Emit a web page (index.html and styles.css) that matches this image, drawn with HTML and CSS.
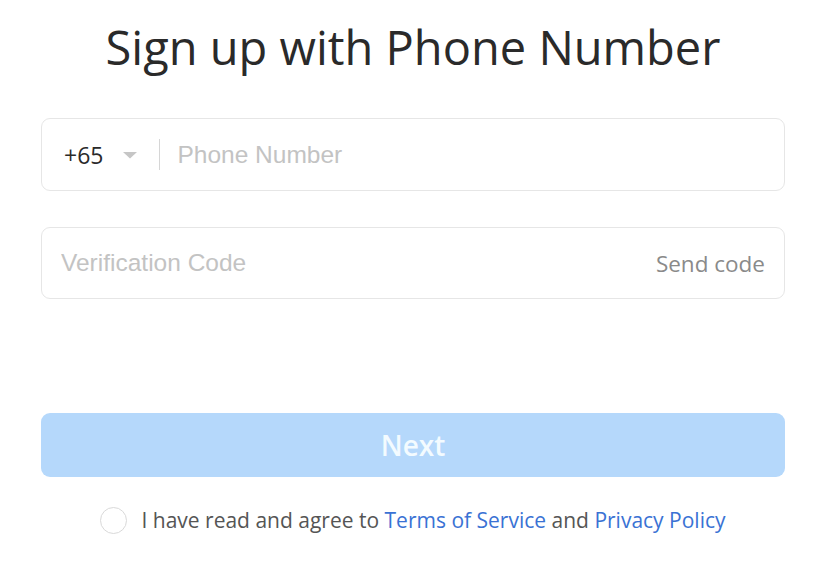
FILE: index.html
```html
<!DOCTYPE html>
<html lang="en">
<head>
  <meta charset="UTF-8">
  <meta name="viewport" content="width=device-width, initial-scale=1.0">
  <title>Sign up with Phone Number</title>
  <link rel="stylesheet" href="styles.css">
</head>
<body>
  <div class="container">
    <h1>Sign up with Phone Number</h1>

    <div class="field">
      <div class="country">
        <span>+65</span>
        <svg class="caret" width="16" height="8" viewBox="0 0 16 8"><path d="M1 1h14L8 7.5z" fill="#c6c6c6"/></svg>
      </div>
      <span class="divider"></span>
      <input type="text" placeholder="Phone Number">
    </div>

    <div class="field code">
      <input type="text" placeholder="Verification Code">
      <a class="send" href="#">Send code</a>
    </div>

    <button class="next" disabled>Next</button>

    <div class="agree">
      <span class="radio"></span>
      <span>I have read and agree to <a href="#">Terms of Service</a> and <a href="#">Privacy Policy</a></span>
    </div>
  </div>
</body>
</html>
```

FILE: styles.css
```css
body {
  margin: 0;
  background-color: #fff;
  font-family: 'Open Sans', sans-serif;
  color: #232323;
}

.container {
  width: 744px;
  margin-left: 41px;
  padding-top: 15px;
}

h1 {
  margin: 0 0 39px;
  text-align: center;
  font-size: 47px;
  font-weight: 400;
  line-height: 64px;
  color: #2a2a2a;
}

.field {
  display: flex;
  align-items: center;
  height: 71px;
  border: 1px solid #e6e6e6;
  border-radius: 9px;
  margin-bottom: 36px;
  padding: 0 19px 0 22px;
}

.field input {
  flex: 1;
  min-width: 0;
  border: none;
  outline: none;
  font-family: 'Liberation Sans', Arial, sans-serif;
  font-size: 24.5px;
  color: #333;
  background: transparent;
  padding: 0;
}

.field input::placeholder {
  color: #c3c3c3;
}

.country {
  display: flex;
  align-items: center;
  font-size: 23px;
  color: #2a2a2a;
}

.caret {
  margin-left: 19px;
}

.divider {
  width: 1px;
  height: 31px;
  background-color: #d6d6d6;
  margin: 0 17px 0 21px;
}

.code {
  height: 70px;
  padding-left: 19px;
}

.send {
  font-size: 22.5px;
  color: #8a8a8a;
  text-decoration: none;
}

.next {
  display: block;
  width: 100%;
  height: 64px;
  margin-top: 114px;
  border: none;
  border-radius: 9px;
  background-color: #b5d8fb;
  color: #f3fbff;
  font-family: 'Open Sans', sans-serif;
  font-size: 28px;
  font-weight: 600;
}

.agree {
  display: flex;
  align-items: center;
  justify-content: center;
  margin-top: 29px;
  font-size: 21px;
  color: #555;
}

.radio {
  width: 25px;
  height: 25px;
  border: 1px solid #d9d9d9;
  border-radius: 50%;
  margin-right: 14px;
}

.agree a {
  color: #3a72d4;
  text-decoration: none;
}
```
